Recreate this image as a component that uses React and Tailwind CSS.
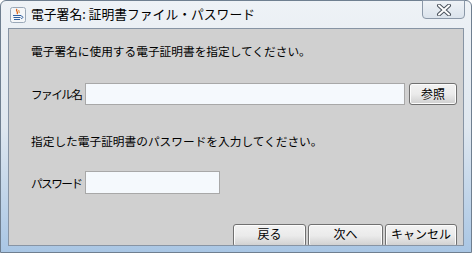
import React from "react";

const font = { fontFamily: '"Noto Sans CJK JP", "Noto Sans", sans-serif' };

function JavaIcon() {
  return (
    <svg width="16" height="16" viewBox="0 0 16 16">
      <rect x="0.5" y="0.5" width="15" height="15" rx="2" fill="#f4f6f8" stroke="#9aa8b8" />
      <path d="M7 2 C5 4 9 5 7 7" stroke="#e06010" strokeWidth="1.3" fill="none" />
      <path d="M9 3 C8 4 10 5 9 6" stroke="#e08020" strokeWidth="1" fill="none" />
      <path d="M3 8.5 H11 M3.5 10.5 H10.5 M4 12.5 H10" stroke="#3060a0" strokeWidth="1.2" />
      <path d="M11 9 C13.5 9 13.5 11.5 11 11.5" stroke="#3060a0" strokeWidth="1" fill="none" />
    </svg>
  );
}

function CloseX() {
  return (
    <svg width="16" height="12" viewBox="0 0 16 12">
      <path d="M3 1.5 L13 10.5 M13 1.5 L3 10.5" stroke="#4a525c" strokeWidth="4" strokeLinecap="round" />
      <path d="M3 1.5 L13 10.5 M13 1.5 L3 10.5" stroke="#ffffff" strokeWidth="2" strokeLinecap="round" />
    </svg>
  );
}

function Btn({ children, className = "" }) {
  return (
    <div
      className={
        "flex items-center justify-center whitespace-nowrap rounded-[3px] border border-[#707070] bg-gradient-to-b from-[#f2f2f2] via-[#ebebeb] to-[#cfcfcf] text-[12px] text-black shadow-[inset_0_0_0_1px_#fcfcfc] " +
        className
      }
    >
      {children}
    </div>
  );
}

export default function App() {
  return (
    <div className="w-[472px] h-[253px] overflow-hidden bg-white" style={font}>
      <div className="relative w-[472px] h-[253px] bg-gradient-to-b from-[#eef2f6] via-[#dfe7ef] to-[#a9c6e4] border border-[#6f7f90] rounded-t-[6px] flex flex-col">
        {/* title bar */}
        <div className="h-[27px] flex items-center pl-[9px] shrink-0">
          <JavaIcon />
          <span className="ml-[5px] text-[12.8px] text-black leading-none whitespace-nowrap">電子署名: 証明書ファイル・パスワード</span>
        </div>
        <div className="absolute right-[6px] top-[-1px] w-[43px] h-[19px] rounded-b-[4px] border border-[#8b98a8] bg-gradient-to-b from-[#eef2f6] to-[#dbe3ec] flex items-center justify-center">
          <CloseX />
        </div>
        {/* content */}
        <div className="mx-[7px] h-[218px] border border-[#8794a4] bg-[#d0d0d0] overflow-hidden flex flex-col text-[11.7px] text-black">
          <div className="pl-[22px] mt-[14px] leading-[16px] whitespace-nowrap">電子署名に使用する電子証明書を指定してください。</div>
          <div className="flex items-center mt-[24px] h-[22px] pl-[22px]">
            <span className="w-[54px] shrink-0 leading-none whitespace-nowrap tracking-[-1.6px]">ファイル名</span>
            <div className="w-[320px] shrink-0 h-[22px] border border-[#a8a8a8] bg-[#f5f9fd]" />
            <Btn className="ml-[4px] w-[48px] h-[22px] shrink-0">参照</Btn>
          </div>
          <div className="pl-[22px] mt-[28px] leading-[16px] whitespace-nowrap">指定した電子証明書のパスワードを入力してください。</div>
          <div className="flex items-center mt-[22px] h-[23px] pl-[22px]">
            <span className="w-[54px] shrink-0 leading-none whitespace-nowrap tracking-[-1.6px]">パスワード</span>
            <div className="w-[135px] shrink-0 h-[23px] border border-[#a8a8a8] bg-[#f5f9fd]" />
          </div>
          <div className="flex mt-[30px] pl-[224px] gap-[2px]">
            <Btn className="w-[73px] h-[23px] leading-none pb-[4px] shrink-0">戻る</Btn>
            <Btn className="w-[75px] h-[23px] leading-none pb-[4px] shrink-0">次へ</Btn>
            <Btn className="w-[72px] h-[23px] leading-none pb-[4px] shrink-0">キャンセル</Btn>
          </div>
        </div>
      </div>
    </div>
  );
}
